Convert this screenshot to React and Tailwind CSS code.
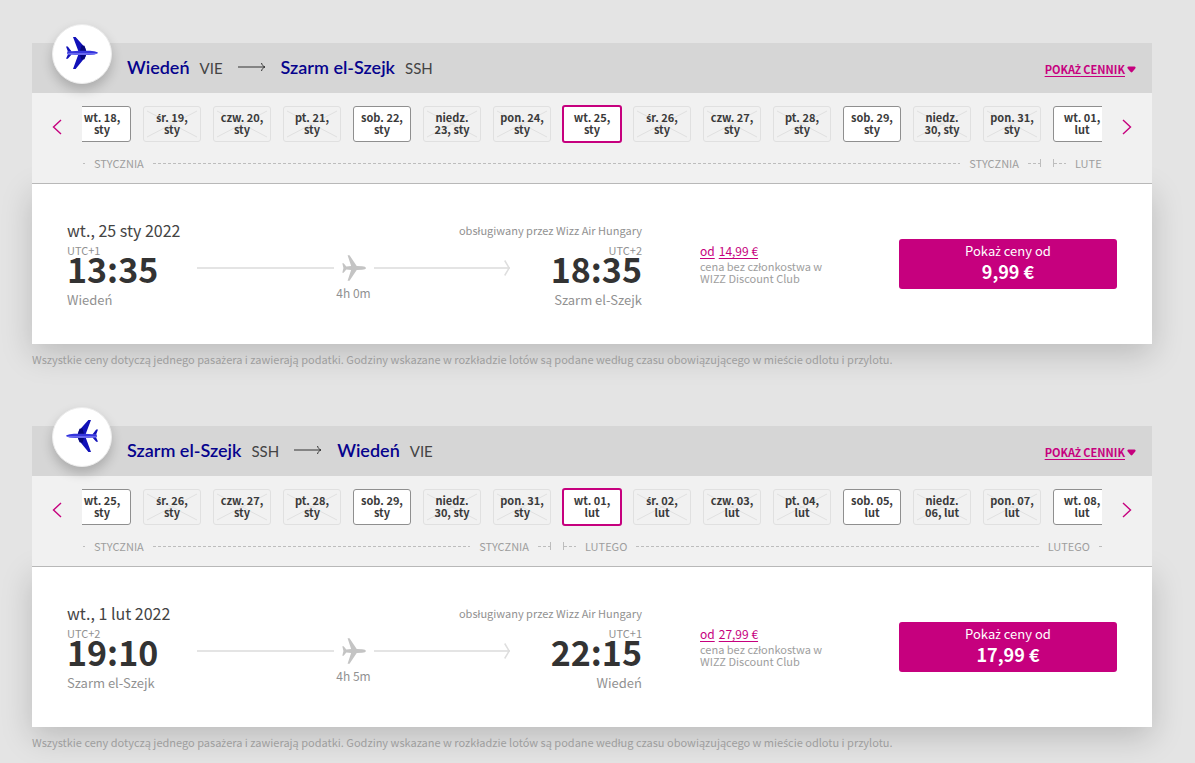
const flights = [
  {
    from: { name: "Wiedeń", code: "VIE", utc: "UTC+1", time: "13:35" },
    to: { name: "Szarm el-Szejk", code: "SSH", utc: "UTC+2", time: "18:35" },
    date: "wt., 25 sty 2022",
    duration: "4h 0m",
    regularPrice: "14,99 €",
    clubPrice: "9,99 €",
    selected: 7,
    open: [0, 4, 7, 11, 14],
    days: ["wt. 18, sty", "śr. 19, sty", "czw. 20, sty", "pt. 21, sty", "sob. 22, sty", "niedz. 23, sty", "pon. 24, sty", "wt. 25, sty", "śr. 26, sty", "czw. 27, sty", "pt. 28, sty", "sob. 29, sty", "niedz. 30, sty", "pon. 31, sty", "wt. 01, lut"],
    months: [
      { label: "STYCZNIA", days: 14, ends: true },
      { label: "LUTEGO", days: 1, starts: true },
    ],
  },
  {
    back: true,
    from: { name: "Szarm el-Szejk", code: "SSH", utc: "UTC+2", time: "19:10" },
    to: { name: "Wiedeń", code: "VIE", utc: "UTC+1", time: "22:15" },
    date: "wt., 1 lut 2022",
    duration: "4h 5m",
    regularPrice: "27,99 €",
    clubPrice: "17,99 €",
    selected: 7,
    open: [0, 4, 7, 11, 14],
    days: ["wt. 25, sty", "śr. 26, sty", "czw. 27, sty", "pt. 28, sty", "sob. 29, sty", "niedz. 30, sty", "pon. 31, sty", "wt. 01, lut", "śr. 02, lut", "czw. 03, lut", "pt. 04, lut", "sob. 05, lut", "niedz. 06, lut", "pon. 07, lut", "wt. 08, lut"],
    months: [
      { label: "STYCZNIA", days: 7, ends: true },
      { label: "LUTEGO", days: 8, starts: true },
    ],
  },
];

// The main typeface misplaces the marks of ż and ś, so those letters use Noto Sans.
function Pl({ children }) {
  return children.split(/([żśŻŚ])/).map((part, i) =>
    i % 2 ? (
      <span key={i} className="font-['Noto_Sans',sans-serif] text-[0.93em] leading-none">
        {part}
      </span>
    ) : (
      part
    )
  );
}

function BluePlane({ flip }) {
  return (
    <svg width="32" height="32" viewBox="0 0 32 32" className={flip ? "-scale-x-100" : ""} aria-hidden="true">
      <path d="M7 0h2.6l9.4 10.5 1.4 4H12.5zM7 32h2.6L19 20.5l1.4-3.5H12.5z" fill="#1111b8" />
      <path d="M15.5 8.5l3 .3 1.8 5.7h-6.5zM15.5 22.8l3-.6 1.8-5h-6.5z" fill="#06067a" />
      <path d="M0 9.5h1.8l4 5.2H2zM0 21.8h1.8l4-4.6H2z" fill="#1111b8" />
      <path d="M1.2 14.6C10 13.6 20 13.7 26 14c3 .2 5.6 1 6 1.8-.4 1-3 1.8-6 2-6 .4-16 .3-24.8-.6z" fill="#3535dc" />
      <path d="M2 16.2h29.4c-1.4.8-3.4 1.2-5.4 1.4-6 .3-15 .2-24-.4z" fill="#7a7af5" />
    </svg>
  );
}

function GreyPlane() {
  return (
    <svg width="24" height="26" viewBox="0 0 30 32" className="mx-auto" aria-hidden="true">
      <path
        d="M7 0h2.4l9 13.4 6.8.4c2.8.2 4.6 1.1 4.8 2.2-.2 1.1-2 2-4.800 2.200l-6.800.4L9.400 32H7l4.400-13.400-6-.6L2 21.800H.4L1.800 16 .4 10.200H2L5.400 14l6-.6z"
        fill="#c4c4c4"
      />
    </svg>
  );
}

function Chevron({ left }) {
  return (
    <svg width="10" height="16" viewBox="0 0 10 16" fill="none" stroke="#c6007e" strokeWidth="1.4" aria-hidden="true">
      <path d={left ? "M9 1 1.500 8 9 15" : "M1 1 8.500 8 1 15"} />
    </svg>
  );
}

function Day({ text, open, selected }) {
  const tone = selected
    ? "h-[38px] w-[60px] border-2 border-[#c6007e] bg-white"
    : open
      ? "h-9 w-[58px] border border-[#8f8f8f] bg-white"
      : "h-9 w-[58px] border border-[#e0e0e0]";
  return (
    <div className="flex h-[38px] w-[70px] flex-none items-center justify-center">
      <button
        type="button"
        disabled={!open}
        aria-pressed={selected}
        className={"relative flex items-center justify-center rounded-[3px] pb-0.5 text-[11px] leading-3 font-bold text-[#3a3a3a] " + tone}
      >
        {!open && (
          <svg className="absolute inset-0 h-full w-full" viewBox="0 0 56 34" aria-hidden="true">
            <path d="M3 4 53 30M53 4 3 30" stroke="#e0e0e0" strokeWidth="1" />
          </svg>
        )}
        <span className="relative w-[54px] px-1">
          <Pl>{text}</Pl>
        </span>
      </button>
    </div>
  );
}

const dash =
  "h-px bg-[repeating-linear-gradient(90deg,#bdbdbd_0_3px,transparent_3px_5px)]";

function Month({ label, days, starts, ends }) {
  const long = days > 1;
  return (
    <div className="flex flex-none items-center px-1.5 text-[11px] leading-4 text-[#9e9e9e]" style={{ width: days * 70 }}>
      {starts && <span className="h-2 w-px flex-none bg-[#bdbdbd]" />}
      <span className={"w-3 flex-none " + dash} />
      <span className="mx-[9px] flex-none">{label}</span>
      {long && <span className={"flex-1 " + dash} />}
      {long && <span className="mx-[9px] flex-none">{label}</span>}
      {long && <span className={"w-3 flex-none " + dash} />}
      {ends && <span className="h-2 w-px flex-none bg-[#bdbdbd]" />}
    </div>
  );
}

function Flight({ f }) {
  return (
    <section>
      <div>
        <header className="relative z-10 flex h-[50px] items-center bg-[#d6d6d6] pr-4 pl-5">
          <div className="-mt-7 flex size-[60px] flex-none items-center justify-center rounded-full border border-[#ececec] bg-white pb-0.5 shadow-[0_6px_12px_rgba(0,0,0,0.2)]">
            <BluePlane flip={f.back} />
          </div>
          <h2 className="ml-[15px] flex items-baseline pb-0.5 font-[Lato,sans-serif] text-[18px] leading-6 text-[#06038d]">
            <span className="font-semibold">{f.from.name}</span>
            <span className="ml-2.5 text-[15px] text-[#444444]">{f.from.code}</span>
            <svg width="28" height="10" viewBox="0 0 28 10" fill="none" stroke="#333333" className="mx-[15px] self-center" aria-label="do">
              <path d="M0 5h27M23.500 1c.5 2 1.500 3.200 3.500 4-2 .8-3 2-3.500 4" />
            </svg>
            <span className="font-semibold">{f.to.name}</span>
            <span className="ml-2.5 text-[15px] text-[#444444]">{f.to.code}</span>
          </h2>
          <a href="#cennik" className="ml-auto flex items-center pt-px text-[11px] leading-4 font-bold text-[#c6007e]">
            <span className="underline underline-offset-2">
              <Pl>POKAŻ CENNIK</Pl>
            </span>
            <svg width="9" height="7" viewBox="0 0 9 7" className="mt-0.5 ml-0.5" aria-hidden="true">
              <path d="M1.500.5h6C8.500.5 9 1.500 8.300 2.500L5.300 6c-.5.600-1.100.600-1.600 0L.7 2.500C0 1.500.5.5 1.500.5z" fill="#c6007e" />
            </svg>
          </a>
        </header>

        <div className="relative z-[5] flex h-[91px] border-b border-[#b8b8b8] bg-[#f1f1f1]">
          <button type="button" aria-label="Wcześniejsze dni" className="flex h-[68px] w-[50px] flex-none items-center justify-center">
            <Chevron left />
          </button>
          <div className="min-w-0 flex-1 overflow-hidden pt-3">
            <div className="flex justify-center">
              {f.days.map((d, i) => (
                <Day key={d} text={d} open={f.open.includes(i)} selected={i === f.selected} />
              ))}
            </div>
            <div className="mt-3 flex justify-center">
              {f.months.map((m) => (
                <Month key={m.label} {...m} />
              ))}
            </div>
          </div>
          <button type="button" aria-label="Późniejsze dni" className="flex h-[68px] w-[50px] flex-none items-center justify-center">
            <Chevron />
          </button>
        </div>

        <div className="flex h-40 items-start bg-white px-[35px] pt-[34px] shadow-[0_10px_30px_rgba(0,0,0,0.18)]">
          <div className="flex-1">
            <div className="flex items-center justify-between leading-6">
              <span className="text-[16px] text-[#444444]">{f.date}</span>
              <span className="text-[11px] text-[#919191]">obsługiwany przez Wizz Air Hungary</span>
            </div>
            <div className="grid grid-cols-[130px_1fr_132px] text-[#919191]">
              <div>
                <p className="text-[11px] leading-4">{f.from.utc}</p>
                <p className="text-[34px] leading-[22px] font-bold text-[#333333]">{f.from.time}</p>
                <p className="mt-2.5 text-[13px] leading-5">{f.from.name}</p>
              </div>
              <div className="pt-[13px]">
                <div className="flex items-center">
                  <span className="h-0.5 flex-1 bg-[#e4e4e4]" />
                  <span className="w-10">
                    <GreyPlane />
                  </span>
                  <span className="flex flex-1 items-center">
                    <span className="h-0.5 flex-1 bg-[#e4e4e4]" />
                    <svg width="6" height="16" viewBox="0 0 6 16" fill="none" stroke="#dedede" strokeWidth="1.500" className="-ml-1.5" aria-hidden="true">
                      <path d="M.7.5 5.200 8 .7 15.500" />
                    </svg>
                  </span>
                </div>
                <p className="mt-0.5 text-center text-[12px] leading-5">{f.duration}</p>
              </div>
              <div className="text-right">
                <p className="text-[11px] leading-4">{f.to.utc}</p>
                <p className="text-[34px] leading-[22px] font-bold text-[#333333]">{f.to.time}</p>
                <p className="mt-2.5 text-[13px] leading-5">{f.to.name}</p>
              </div>
            </div>
          </div>

          <div className="ml-[58px] w-[199px] flex-none pt-6">
            <a href="#cena" className="block text-[12px] leading-[18px] text-[#c6007e]">
              <span className="underline underline-offset-2">od</span>
              <span className="ml-1 underline underline-offset-2">{f.regularPrice}</span>
            </a>
            <p className="w-[140px] text-[11px] leading-3 text-[#9e9e9e]">cena bez członkostwa w WIZZ Discount Club</p>
          </div>

          <button type="button" className="mt-[21px] flex h-[50px] w-[218px] flex-none flex-col items-center justify-center rounded-[3px] bg-[#c6007e] pb-1 text-white">
            <span className="text-[13px] leading-[18px]">
              <Pl>Pokaż ceny od</Pl>
            </span>
            <span className="text-[18px] leading-[22px] font-bold">{f.clubPrice}</span>
          </button>
        </div>
      </div>
      <p className="relative mt-[7px] text-[11px] leading-4 text-[#9e9e9e]">
        <Pl>
          Wszystkie ceny dotyczą jednego pasażera i zawierają podatki. Godziny wskazane w rozkładzie lotów są podane według czasu obowiązującego w mieście odlotu i przylotu.
        </Pl>
      </p>
    </section>
  );
}

export default function App() {
  return (
    <main className="flex min-h-screen flex-col gap-[59px] bg-[#e4e4e4] pt-[43px] pr-[43px] pb-3 pl-8 font-['Noto_Sans_CJK_SC','Noto_Sans',sans-serif]">
      {flights.map((f) => (
        <Flight key={f.date} f={f} />
      ))}
    </main>
  );
}
